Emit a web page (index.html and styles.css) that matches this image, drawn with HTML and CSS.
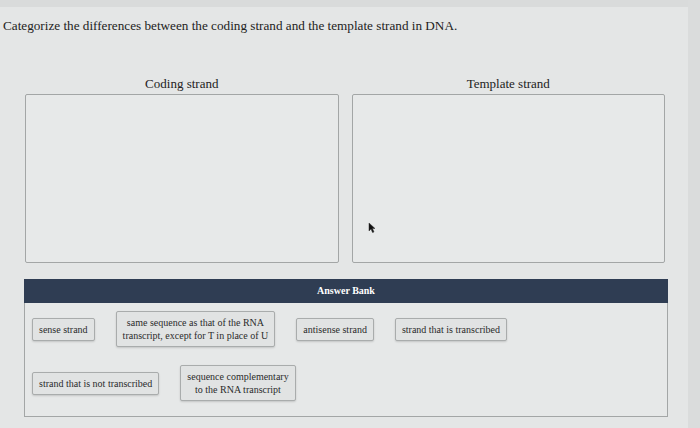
FILE: index.html
```html
<!DOCTYPE html>
<html lang="en">
<head>
    <meta charset="UTF-8">
    <meta name="viewport" content="width=device-width, initial-scale=1.0">
    <title>Categorize</title>
    <link rel="stylesheet" href="styles.css">
</head>
<body>

<div class="topbar"></div>

<div class="page">
    <p class="question">Categorize the differences between the coding strand and the template strand in DNA.</p>

    <div class="bins">
        <div class="bin">
            <div class="bin-title">Coding strand</div>
            <div class="bin-box"></div>
        </div>
        <div class="bin">
            <div class="bin-title">Template strand</div>
            <div class="bin-box"></div>
        </div>
    </div>

    <div class="bank">
        <div class="bank-head">Answer Bank</div>
        <div class="bank-body">
            <div class="bank-row">
                <div class="chip">sense strand</div>
                <div class="chip">same sequence as that of the RNA<br>transcript, except for T in place of U</div>
                <div class="chip">antisense strand</div>
                <div class="chip">strand that is transcribed</div>
            </div>
            <div class="bank-row">
                <div class="chip">strand that is not transcribed</div>
                <div class="chip">sequence complementary<br>to the RNA transcript</div>
            </div>
        </div>
    </div>
</div>

<div class="scrollbar"></div>

<!-- mouse pointer -->
<svg class="pointer" width="8" height="12" viewBox="0 0 8 12">
    <path d="M1 1 L1 9 L3 7 L4.5 10.5 L6 10 L4.5 6.5 L7 6.5 Z" fill="#111" stroke="#333" stroke-width="0.5"/>
</svg>

</body>
</html>
```

FILE: styles.css
```css
body {
    font-family: "Liberation Serif", "Times New Roman", serif;
    background-color: #e4e6e6;
    color: #222;
    margin: 0;
    padding: 0;
    height: 428px;
    overflow: hidden;
    position: relative;
}
.topbar {
    height: 7px;
    background: #d9dbdb;
}
.page {
    width: 688px;
}
.question {
    font-size: 13.2px;
    margin: 11px 0 0 3px;
    line-height: 15px;
}
.bins {
    display: flex;
    gap: 13px;
    margin: 43px 0 0 25px;
    width: 640px;
}
.bin {
    flex: 1;
}
.bin-title {
    text-align: center;
    font-size: 13px;
    line-height: 15px;
    margin-bottom: 3px;
}
.bin-box {
    height: 167px;
    border: 1px solid #a3a6a6;
    border-radius: 2px;
    background: #e7e9e9;
}
.bank {
    margin: 16px 0 0 24px;
    width: 644px;
}
.bank-head {
    background: #2f3d53;
    color: white;
    font-size: 10px;
    font-weight: bold;
    text-align: center;
    height: 24px;
    line-height: 24px;
}
.bank-body {
    border: 1px solid #a3a6a6;
    border-top: none;
    height: 114px;
    padding: 9px 7px 0 7px;
    box-sizing: border-box;
    background: #e6e8e8;
}
.bank-row {
    display: flex;
    align-items: center;
    gap: 21px;
    height: 34px;
    margin-bottom: 20px;
}
.chip {
    font-size: 10px;
    line-height: 13px;
    text-align: center;
    padding: 4px 6px;
    background: #e1e3e3;
    border: 1px solid #a9acac;
    border-radius: 2px;
    box-shadow: 0 1px 2px rgba(0, 0, 0, 0.15);
    color: #2b2b2b;
}
.scrollbar {
    position: absolute;
    top: 0;
    right: 0;
    width: 12px;
    height: 428px;
    background: #dadcdc;
}
.pointer {
    position: absolute;
    left: 368px;
    top: 222px;
}
```
